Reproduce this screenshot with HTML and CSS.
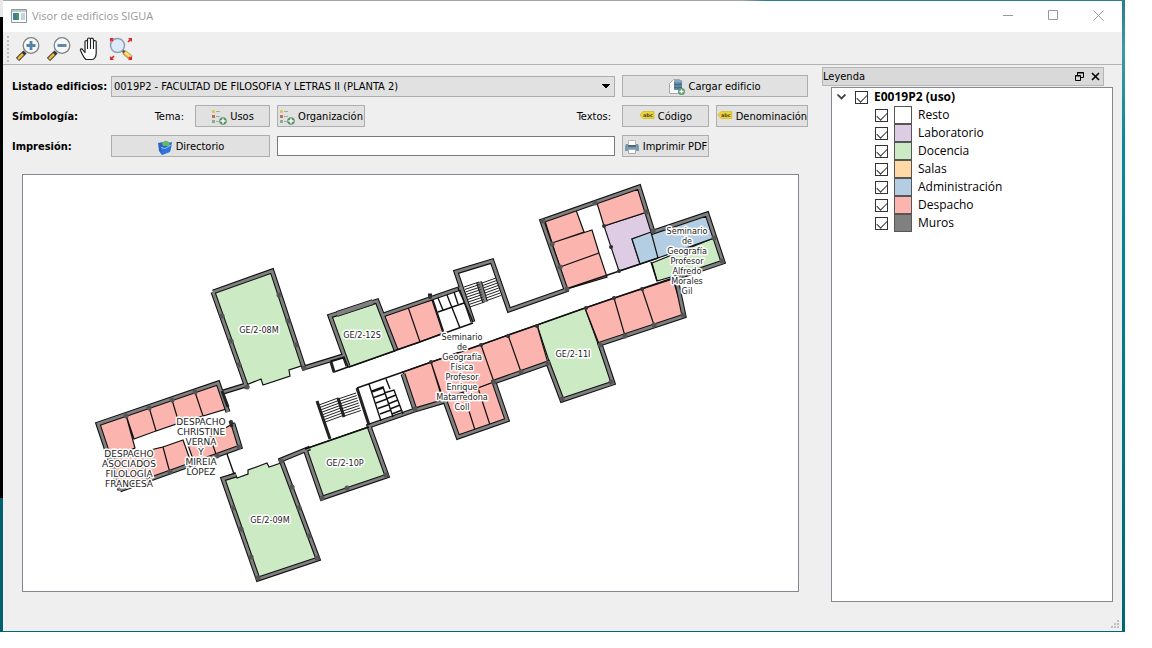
FILE: index.html
```html
<!DOCTYPE html>
<html lang="es">
<head>
<meta charset="utf-8">
<title>Visor de edificios SIGUA</title>
<link rel="stylesheet" href="styles.css">
</head>
<body>
<div class="desktop">
<div class="window">
  <header class="titlebar">
    <svg class="app-icon" width="16" height="14" viewBox="0 0 16 14"><path fill="#fff" stroke="#8b979c" d="M.5.5h15v13H.5z"/><path fill="#b9cbd2" d="M1 1h14v2H1z"/><path fill="#3f7f94" d="M2 4h6v7H2z"/><path fill="#3f9a64" d="M5 4h3v7H6z"/><path fill="#c4d4dc" d="M10 4h4v7h-4z"/></svg>
    <h1 class="title">Visor de edificios SIGUA</h1>
    <button class="win-btn" aria-label="Minimizar"><svg width="11" height="11" viewBox="0 0 11 11"><path d="M0 5.500h10"/></svg></button>
    <button class="win-btn" aria-label="Maximizar"><svg width="11" height="11" viewBox="0 0 11 11"><path d="M.5.5h9v9h-9z"/></svg></button>
    <button class="win-btn" aria-label="Cerrar"><svg width="11" height="11" viewBox="0 0 11 11"><path d="M.5.5l10 10M10.500.5l-10 10"/></svg></button>
  </header>

  <nav class="toolbar" aria-label="Herramientas">
    <span class="grip"></span>
    <button class="tool" aria-label="Acercar"><svg width="24" height="24" viewBox="0 0 24 24"><path stroke="#333" stroke-width="4.500" d="M1.500 22.500L9 15"/><path stroke="#efb83c" stroke-width="2.500" d="M2 22l5-5"/><circle cx="15" cy="8.500" r="7.800" fill="#f6f8f8" stroke="#7d8383" stroke-width="1.300"/><path stroke="#5583a4" stroke-width="2.800" d="M10.500 8.500h9M15 4v9"/></svg></button>
    <button class="tool" aria-label="Alejar"><svg width="24" height="24" viewBox="0 0 24 24"><path stroke="#333" stroke-width="4.500" d="M1.500 22.500L9 15"/><path stroke="#efb83c" stroke-width="2.500" d="M2 22l5-5"/><circle cx="15" cy="8.500" r="7.800" fill="#f6f8f8" stroke="#7d8383" stroke-width="1.300"/><path stroke="#5583a4" stroke-width="2.800" d="M10.500 8.500h9"/></svg></button>
    <button class="tool" aria-label="Desplazar"><svg width="24" height="24" viewBox="0 0 24 24"><path fill="#fff" stroke="#222" stroke-width="1.200" stroke-linejoin="round" d="M8 22.500C5 20 4 16 2.500 13.500 2 11.500 4 11.500 5 13l2 2.500V5c0-2 2.500-2 2.500 0V2.500c0-2 3-2 3 0 0-2 3-2 3 .5v2c0-2 2.700-2 2.700 0v11c0 4-2 6.500-4 6.500z"/><path fill="none" stroke="#222" stroke-width="1.100" d="M9.500 4v8M12.500 3v9M15.500 4v8"/></svg></button>
    <button class="tool" aria-label="Ver todo"><svg width="24" height="24" viewBox="0 0 24 24"><path stroke="#c9a050" stroke-width="5" d="M15 15l7 6"/><path stroke="#ffe07a" stroke-width="2.500" d="M15 14.500l7 6"/><path stroke="#555" stroke-width="3" d="M13 13l2.500 2.500"/><circle cx="8.500" cy="8.500" r="7" fill="#dceafa" stroke="#929fae" stroke-width="1.500"/><path fill="#e0232b" d="M1 1h4L1 5zM23 1v4l-4-4zM1 23v-4l4 4zM23 23h-4l4-4z"/><path stroke="#e0232b" stroke-width="1.700" d="M2 2l2 2M22 2l-3 3M2 22l3-3M22 22l-2-2"/></svg></button>
  </nav>

  <div class="content">
    <main class="panel">
      <form class="form">
        <label class="strong" for="edificio">Listado edificios:</label>
        <select class="combo" id="edificio"><option>0019P2 - FACULTAD DE FILOSOFIA Y LETRAS II (PLANTA 2)</option></select>
        <button type="button" class="btn wide">
          <svg width="16" height="16" viewBox="0 0 16 16"><path fill="#fafafa" stroke="#aaa" d="M.5 14.500V4.500l4-4h6v14z"/><path fill="#6389a5" d="M5 2h8v9H5z"/><ellipse cx="9" cy="2" rx="4" ry="1.500" fill="#85a7bf"/><path stroke="#3f6580" fill="none" d="M5 5q4 2 8 0M5 8q4 2 8 0"/><circle cx="12.500" cy="12.500" r="3.500" fill="#5a9c6c"/><path stroke="#fff" stroke-width="1.300" d="M10.500 12.500h4M12.500 10.500v4"/></svg>
          Cargar edificio</button>

        <span class="strong">Símbología:</span>
        <span class="hint">Tema:</span>
        <button type="button" class="btn"><svg width="16" height="16" viewBox="0 0 16 16"><path stroke="#a3aaa8" d="M5 2.500h4M5 7.500h4M5 12.500h3"/><path fill="#d9cc57" d="M1 1h3v3H1z"/><path fill="#bd6d68" d="M1 6h3v3H1z"/><path fill="#86b08a" d="M1 11h3v3H1z"/><circle cx="12" cy="12" r="3.800" fill="#5a9668"/><path stroke="#fff" stroke-width="1.500" d="M9.500 12h5M12 9.500v5"/></svg>Usos</button>
        <button type="button" class="btn"><svg width="16" height="16" viewBox="0 0 16 16"><path stroke="#a3aaa8" d="M5 2.500h4M5 7.500h4M5 12.500h3"/><path fill="#d9cc57" d="M1 1h3v3H1z"/><path fill="#bd6d68" d="M1 6h3v3H1z"/><path fill="#86b08a" d="M1 11h3v3H1z"/><circle cx="12" cy="12" r="3.800" fill="#5a9668"/><path stroke="#fff" stroke-width="1.500" d="M9.500 12h5M12 9.500v5"/></svg>Organización</button>
        <span class="hint">Textos:</span>
        <button type="button" class="btn"><svg class="tag" width="16" height="16" viewBox="0 0 16 16"><path fill="#ecd53c" stroke="#d8c132" d="M1 6l3-3.500h11v7H4z"/><text class="tag-text" x="4" y="8">abc</text></svg>Código</button>
        <button type="button" class="btn"><svg class="tag" width="16" height="16" viewBox="0 0 16 16"><path fill="#ecd53c" stroke="#d8c132" d="M1 6l3-3.500h11v7H4z"/><text class="tag-text" x="4" y="8">abc</text></svg>Denominación</button>

        <label class="strong" for="ruta">Impresión:</label>
        <button type="button" class="btn wide"><svg width="16" height="16" viewBox="0 0 16 16"><path fill="#2c63c4" d="M1 4l5-1 1 2 8-2-2 9-8 4-3-4z"/><path fill="#63b96a" d="M5 4q3-4 7-1l1 4H6z"/><path fill="#2f74d8" d="M4 8l4 1 7-4-2 8-8 3z"/><path fill="#8cc4fb" d="M4 8l4 1 7-4v1L8 10 4 9z"/></svg>Directorio</button>
        <input class="path" id="ruta" type="text">
        <button type="button" class="btn"><svg width="16" height="16" viewBox="0 0 16 16"><path fill="#fff" stroke="#bbb" d="M4.500 1.500h7v5h-7z"/><path fill="#7b9ab0" d="M2 5h2v2h8V5h2l1 2v5H1V7z"/><path fill="#4b6a80" d="M4 6h8v2H4z"/><path fill="#fff" stroke="#aaa" d="M4.500 10.500h7v4h-7z"/></svg>Imprimir PDF</button>
      </form>

      <div class="map">
      <svg class="plan" viewBox="23 175 775 416" role="img" aria-label="Planta 2">
        <g class="room">
          <path class="doc" d="M214 292L271 272 304 365 289 370 290 376 263 385 261 379 246 385z"/>
          <path class="doc" d="M331 316L377 301 395 351 349 367z"/>
          <path class="doc" d="M222 478L235 473 237 478 248 474 248 470 267 463 269 467 281 463 317 558 258 578z"/>
          <path class="doc" d="M305 449L368 427 386 476 322 498z"/>
          <path class="doc" d="M537 325L585 308 612 382 562 400z"/>
          <path class="doc" d="M652 263L714 238 722 262 657 281z"/>
          <path class="lab" d="M604 226L647 212 653 232 632 239 640 264 619 271z"/>
          <path class="adm" d="M632 239L651 232 658 258 640 264zM651 232L707 213 714 238 658 258z"/>
          <path class="des" d="M545 221L576 210 584 232 552 243zM552 243L592 230 599 253 560 267zM560 267L599 253 607 277 567 289zM597 203L639 188 647 212 604 226z"/>
          <path class="des" d="M585 308L614 298 625 336 599 344zM614 298L642 289 654 325 625 336zM642 289L673 279 684 316 654 325z"/>
          <path class="des" d="M508 335L537 325 548 363 521 372zM481 345L508 335 521 372 494 382zM431 362L481 345 494 382 444 401zM403 372L431 362 443 401 415 410z"/>
          <path class="des" d="M445 399L463 392 475 430 457 436zM463 392L478 388 490 425 475 430zM478 388L494 382 506 419 490 425z"/>
          <path class="des" d="M384 316L408 307 420 342 396 350zM408 307L432 300 443 333 420 342z"/>
          <path class="des" d="M99 424L126 415 135 448 109 457zM126 415L149 407 156 431 134 439zM149 407L172 400 179 423 156 431zM172 400L195 392 203 416 179 423zM195 392L218 384 226 409 203 416z"/>
          <path class="des" d="M109 460L163 447 170 473 120 490zM163 447L183 440 192 465 170 473zM188 445L210 437 217 457 195 465zM210 437L234 423 240 447 217 457z"/>
        </g>
        <g class="wall-edge">
          <path id="walls" d="M213 292L272 271 304 368 343 356M213 292L247 388M246 385L220 393M348 366L330 316 377 301 396 350M383 315L461 288M473 322L456 272 492 261 509 310 566 290 542 221 639 187 653 232 707 214 723 262 676 278 684 316 600 344 613 383 562 400 548 363 494 382 507 420 458 437 445 401 415 410 403 374M415 410L369 426 387 476 322 498 305 449M310 448L281 460 318 559 258 579 223 479 236 475M120 490L98 424 218 383 228 412M233 424L240 447 120 490"/>
        </g>
        <g class="wall-fill"><use href="#walls"/></g>
        <path class="thick-edge" d="M337 314L373 302M479 282L485 302"/>
        <path class="thick-fill" d="M337 314L373 302M479 282L485 302"/>
        <path class="line" d="M227 454L234 474M305 449L369 427M349 367L473 323M357 388L403 372 537 325 585 308 673 278M566 289L658 258M651 262L657 281M331 361L344 357 348 367 334 372zM458 288L473 322M433 300L444 333M447 295L460 328M438 312L464 303M438 298L443 310M454 292L458 304M369 384L381 421M386 379L390 389M372 391L383 387 393 417M384 393L394 390 403 414"/>
        <path class="line" d="M372 392l11-4m-9 9.500l11-4m-9 9.500l11-4m-9 9.500l11-4m-9 9.500l11-4M386 399l10-4m-8 9l10-4m-8 9l10-4m-8 9l10-4"/>
        <path class="heavy" d="M331 362l3 10M222 391l6 16M357 388l12 37M428 295l4 0M230 421l2 6M317 401l13 38"/>
        <path class="steps" d="M464 287l15-5m-14.300 7.500l15-5m-14.300 7.500l15-5m-14.300 7.500l15-5m-14.300 7.500l15-5m-14.300 7.500l15-5m-14.300 7.500l15-5m-14.300 7.500l15-5m-14.300 7.500l15-5M482 283l14-5m-13.300 7.500l14-5m-13.300 7.500l14-5m-13.300 7.500l14-5m-13.300 7.500l14-5m-13.300 7.500l14-5m-13.300 7.500l14-5m-13.300 7.500l14-5"/>
        <path class="steps" d="M319 405l19-7m-18.300 9.500l19-7m-18.300 9.500l19-7m-18.300 9.500l19-7m-18.300 9.500l19-7m-18.300 9.500l19-7m-18.300 9.500l19-7m-18.300 9.500l19-7M338 399l18-6m-17.300 8.500l18-6m-17.300 8.500l18-6m-17.300 8.500l18-6m-17.300 8.500l18-6m-17.300 8.500l18-6m-17.300 8.500l18-6m-17.300 8.500l18-6"/>
        <path class="heavy" d="M338 398l6 19"/>
        <path class="pillar" d="M222 316h.1M231 341h.1M239 365h.1M279 295h.1M288 321h.1M296 345h.1M304 368h.1M247 387h.1M233 508h.1M241 529h.1M251 557h.1M292 487h.1M299 508h.1M309 536h.1M281 461h.1M347 488h.1M386 475h.1M322 498h.1M258 578h.1M317 558h.1M126 416h.1M149 408h.1M172 400h.1M195 392h.1M239 447h.1M217 456h.1M170 472h.1M415 409h.1M494 382h.1M521 372h.1M548 363h.1M562 399h.1M611 382h.1M600 345h.1M625 336h.1M654 325h.1M683 315h.1M722 261h.1M714 238h.1M653 231h.1M646 212h.1M595 203h.1M543 221h.1M552 244h.1M560 267h.1M567 289h.1"/>
        <path class="dot" d="M431 362h.1M481 345h.1M508 336h.1M537 326h.1M586 308h.1M614 298h.1M642 289h.1M604 226h.1M611 247h.1M619 271h.1M430 297h.1M231 422h.1"/>

        <g class="label">
          <text x="259" y="333">GE/2-08M</text>
          <text x="362" y="338">GE/2-12S</text>
          <text x="573" y="357">GE/2-11I</text>
          <text x="345" y="466">GE/2-10P</text>
          <text x="270" y="523">GE/2-09M</text>
          <text><tspan x="687" y="234">Seminario</tspan><tspan x="687" dy="10">de</tspan><tspan x="687" dy="10">Geografía</tspan><tspan x="687" dy="10">Profesor</tspan><tspan x="687" dy="10">Alfredo</tspan><tspan x="687" dy="10">Morales</tspan><tspan x="687" dy="10">Gil</tspan></text>
          <text><tspan x="462" y="340">Seminario</tspan><tspan x="462" dy="10">de</tspan><tspan x="462" dy="10">Geografía</tspan><tspan x="462" dy="10">Física</tspan><tspan x="462" dy="10">Profesor</tspan><tspan x="462" dy="10">Enrique</tspan><tspan x="462" dy="10">Matarredona</tspan><tspan x="462" dy="10">Coll</tspan></text>
          <text class="caps"><tspan x="201" y="425">DESPACHO</tspan><tspan x="201" dy="10">CHRISTINE</tspan><tspan x="201" dy="10">VERNA</tspan><tspan x="201" dy="10">Y</tspan><tspan x="201" dy="10">MIREIA</tspan><tspan x="201" dy="10">LÓPEZ</tspan></text>
          <text class="caps"><tspan x="129" y="457">DESPACHO</tspan><tspan x="129" dy="10">ASOCIADOS</tspan><tspan x="129" dy="10">FILOLOGÍA</tspan><tspan x="129" dy="10">FRANCESA</tspan></text>
        </g>
      </svg>
      </div>
    </main>

    <aside class="dock">
      <div class="dock-title">
        <h2 class="dock-name">Leyenda</h2>
        <button class="dock-btn" aria-label="Flotar"><svg width="9" height="9" viewBox="0 0 9 9"><path d="M2.500 3V.5h6v5H6M2 1h7M.5 3.500h5v5h-5zM0 4h6"/></svg></button>
        <button class="dock-btn" aria-label="Cerrar leyenda"><svg width="9" height="9" viewBox="0 0 9 9"><path stroke-width="1.600" d="M1 1l7 7M8 1L1 8"/></svg></button>
      </div>
      <div class="tree">
        <div class="root"><svg width="9" height="6" viewBox="0 0 9 6"><path fill="none" stroke="#444" stroke-width="1.800" d="M.5.5l4 4 4-4"/></svg><label class="row strong"><input class="check" type="checkbox" checked>E0019P2 (uso)</label></div>
        <label class="row child"><input class="check" type="checkbox" checked><i class="swatch resto"></i>Resto</label>
        <label class="row child"><input class="check" type="checkbox" checked><i class="swatch laboratorio"></i>Laboratorio</label>
        <label class="row child"><input class="check" type="checkbox" checked><i class="swatch docencia"></i>Docencia</label>
        <label class="row child"><input class="check" type="checkbox" checked><i class="swatch salas"></i>Salas</label>
        <label class="row child"><input class="check" type="checkbox" checked><i class="swatch administracion"></i>Administración</label>
        <label class="row child"><input class="check" type="checkbox" checked><i class="swatch despacho"></i>Despacho</label>
        <label class="row child"><input class="check" type="checkbox" checked><i class="swatch muros"></i>Muros</label>
      </div>
    </aside>
  </div>
  <svg class="size-grip" width="8" height="8" viewBox="0 0 8 8"><path fill="#bfbfbf" d="M6 0h2v2H6zM3 3h2v2H3zM6 3h2v2H6zM0 6h2v2H0zM3 6h2v2H3zM6 6h2v2H6z"/></svg>
</div>
</div>
</body>
</html>
```

FILE: styles.css
```css
* { box-sizing: border-box; }

body {
  margin: 0;
  padding: 0 27px 16px 0;
  background: #fff;
  font-family: "DejaVu Sans Condensed", "DejaVu Sans", sans-serif;
  font-size: 11px;
  line-height: 16px;
  color: #000;
}

.desktop {
  min-height: calc(100vh - 16px);
  display: flex;
  padding: 1px 3px 1px 3px;
  background:
    linear-gradient(#e8e8e8 0 17px, #000 17px 498px, #00606e 498px) left / 3px 100% no-repeat,
    linear-gradient(#287f8b, #3f98a2 50px, #0d8795 140px, #007884 400px, #006574) right / 3px 100% no-repeat,
    linear-gradient(90deg, #a3a5a6 0 66%, #2d7f8a 68%) top / 100% 1px no-repeat,
    #006574;
}

.window {
  flex: 1;
  display: flex;
  flex-direction: column;
  position: relative;
  background: #efefef;
}

button { font: inherit; color: inherit; padding: 0; }

.titlebar { display: flex; align-items: center; height: 31px; background: #fff; padding: 0 1px 2px 8px; }
.title { flex: 1; margin: 0 0 0 5px; font: 11px/16px "Open Sans", sans-serif; color: #999; }
.win-btn { width: 45px; height: 29px; border: 0; background: none; display: grid; place-items: center; }
.win-btn path { fill: none; stroke: #999; }

.toolbar { display: flex; align-items: center; gap: 7px; height: 33px; padding: 1px 0 0 4px; border-bottom: 1px solid #b3b3b3; }
.grip { width: 2px; height: 26px; background: repeating-linear-gradient(#bdbdbd 0 2px, #efefef 2px 4px); }
.tool { width: 24px; height: 24px; border: 0; background: none; display: grid; }

.content { flex: 1; display: flex; gap: 14px; padding: 2px 9px 29px; }
.panel { flex: 1; display: flex; flex-direction: column; }

.form {
  display: grid;
  grid-template-columns: 92px 77px 75px 88px 1fr 87px 92px;
  gap: 8px 7px;
  align-items: center;
  padding-top: 8px;
}
.strong { font-weight: bold; }
.form .strong, .hint { padding-top: 2px; white-space: nowrap; }
.hint { text-align: right; padding-right: 4px; }
.combo {
  grid-column: span 4;
  height: 21px;
  padding: 1px 4px 0 2px;
  border: 1px solid #adadad;
  border-radius: 0;
  appearance: none;
  background-color: #e1e1e1;
  background-image: linear-gradient(45deg, transparent 50%, #000 50%), linear-gradient(-45deg, transparent 50%, #000 50%);
  background-position: right 8px center, right 4px center;
  background-size: 4px 4px;
  background-repeat: no-repeat;
  font: inherit;
  color: #000;
}
.btn {
  display: flex;
  align-items: center;
  justify-content: center;
  gap: 3px;
  height: 22px;
  padding-top: 1px;
  border: 1px solid #adadad;
  background: #e1e1e1;
  white-space: nowrap;
}
.wide { grid-column: span 2; }
.path { grid-column: span 2; min-width: 0; height: 20px; border: 1px solid #7a7a7a; background: #fff; font: inherit; }
.tag-text { font: bold 5px "DejaVu Sans", sans-serif; fill: #4a4520; }

.map { flex: 1; margin: 17px 9px 10px 10px; border: 1px solid #828790; background: #fff; display: flex; min-height: 0; }
.plan { display: block; width: 100%; }

.room path { stroke: #111; stroke-width: 1.2; }
.doc { fill: #ccebc5; }
.lab { fill: #decbe4; }
.adm { fill: #b3cde3; }
.des { fill: #fbb4ae; }
.wall-edge { fill: none; stroke: #111; stroke-width: 5; }
.wall-fill { fill: none; }
.wall-fill use { stroke: #808080; stroke-width: 2.8; }
.thick-edge { fill: none; stroke: #111; stroke-width: 6; }
.thick-fill { fill: none; stroke: #808080; stroke-width: 4; }
.line { fill: none; stroke: #111; stroke-width: 1.4; }
.heavy { fill: none; stroke: #222; stroke-width: 3; }
.steps { fill: none; stroke: #222; stroke-width: 1; }
.pillar { stroke: #555; stroke-width: 5; stroke-linecap: round; }
.dot { stroke: #333; stroke-width: 4; stroke-linecap: round; }
.label {
  font-family: "DejaVu Sans Condensed", "DejaVu Sans", sans-serif;
  font-size: 9px;
  text-anchor: middle;
  fill: #222;
  stroke: #fff;
  stroke-width: 3;
  stroke-linejoin: round;
  paint-order: stroke;
}
.caps { font-family: "DejaVu Sans", sans-serif; }

.dock { width: 291px; display: flex; flex-direction: column; gap: 1px; }
.dock-title { display: flex; align-items: center; height: 19px; margin-right: 9px; border: 1px solid #b5b5b5; background: #d9d9d9; }
.dock-name { flex: 1; margin: 0; font: inherit; }
.dock-btn { width: 16px; height: 16px; border: 0; background: none; display: grid; place-items: center; }
.dock-btn path { fill: none; stroke: #000; }
.tree { flex: 1; margin-left: 9px; border: 1px solid #828790; background: #fff; font-family: "Open Sans", sans-serif; font-size: 12px; }
.root { display: flex; align-items: center; gap: 9px; padding-left: 5px; }
.row { display: flex; align-items: center; height: 18px; gap: 6px; }
.child { padding-left: 43px; }
.check { appearance: none; position: relative; width: 13px; height: 13px; margin: 0; border: 1px solid #333; background: #fff; }
.check:checked::after {
  content: "";
  position: absolute;
  left: 1px;
  top: 2px;
  width: 9px;
  height: 5px;
  border: solid #333;
  border-width: 0 0 1px 1px;
  transform: rotate(-45deg);
}
.swatch { width: 18px; height: 18px; border: 1px solid #555; }
.resto { background: #fff; }
.laboratorio { background: #decbe4; }
.docencia { background: #ccebc5; }
.salas { background: #fed9a6; }
.administracion { background: #b3cde3; }
.despacho { background: #fbb4ae; }
.muros { background: #808080; }

.size-grip { position: absolute; right: 3px; bottom: 3px; }
```
